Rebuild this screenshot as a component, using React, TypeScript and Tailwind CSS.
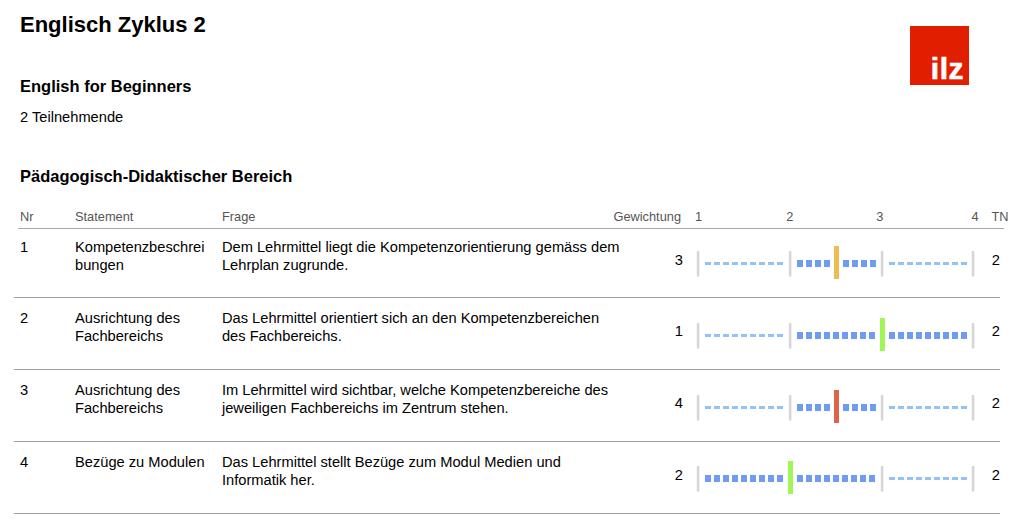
import React from 'react';

type RowData = {
  nr: number;
  statement: string;
  frage: string;
  value: number;
  tn: number;
  marker: number;
  color: string;
  from: number;
  to: number;
  chartClass: string;
};

const rows: RowData[] = [
  {
    nr: 1,
    statement: 'Kompetenzbeschrei bungen',
    frage: 'Dem Lehrmittel liegt die Kompetenzorientierung gemäss dem Lehrplan zugrunde.',
    value: 3,
    tn: 2,
    marker: 2.5,
    color: '#ebbd53',
    from: 2,
    to: 3,
    chartClass: 'pt-[12px]',
  },
  {
    nr: 2,
    statement: 'Ausrichtung des Fachbereichs',
    frage: 'Das Lehrmittel orientiert sich an den Kompetenzbereichen des Fachbereichs.',
    value: 1,
    tn: 2,
    marker: 3,
    color: '#9df754',
    from: 2,
    to: 4,
    chartClass: 'pt-[13px]',
  },
  {
    nr: 3,
    statement: 'Ausrichtung des Fachbereichs',
    frage: 'Im Lehrmittel wird sichtbar, welche Kompetenzbereiche des jeweiligen Fachbereichs im Zentrum stehen.',
    value: 4,
    tn: 2,
    marker: 2.5,
    color: '#e0614c',
    from: 2,
    to: 3,
    chartClass: 'pt-[13px]',
  },
  {
    nr: 4,
    statement: 'Bezüge zu Modulen',
    frage: 'Das Lehrmittel stellt Bezüge zum Modul Medien und Informatik her.',
    value: 2,
    tn: 2,
    marker: 2,
    color: '#9df754',
    from: 1,
    to: 3,
    chartClass: 'pt-[12px]',
  },
];

const tickX = [0, 92, 184, 275];

const Segment = ({ index, dark, marker }: { index: number; dark: boolean; marker: number }) => {
  const start = tickX[index] + 8;
  // marker in the middle of a segment: four blocks on either side
  const offsets =
    dark && marker > index + 1 && marker < index + 2
      ? [0, 9, 18, 27, 46, 55, 64, 73]
      : [0, 9, 18, 27, 36, 45, 54, 63, 72];
  return (
    <>
      {offsets.map((d) =>
        dark ? (
          <rect key={d} x={start + d} y={10} width={6} height={7} fill="#6f9cf3" />
        ) : (
          <rect key={d} x={start + d} y={12} width={6} height={3} fill="#93c2fb" />
        ),
      )}
    </>
  );
};

const Chart = ({ row }: { row: RowData }) => {
  const markerX = row.marker === 2.5 ? 137 : ((row.marker - 1) / 3) * 276 - 1;
  return (
    <svg width={280} height={30} className="block shrink-0 overflow-visible">
      {tickX.map((x) => (
        <rect key={x} x={x - 0.2} y={1} width={2.6} height={25.5} fill="#d6d6d6" />
      ))}
      {[0, 1, 2].map((i) => (
        <Segment key={i} index={i} dark={i + 1 >= row.from && i + 1 < row.to} marker={row.marker} />
      ))}
      <rect x={markerX} y={-4} width={5} height={33} fill={row.color} />
    </svg>
  );
};

const App = () => {
  return (
    <div className="w-[1016px] h-[521px] overflow-hidden bg-white text-black font-['Liberation_Sans',Arial,sans-serif]">
      <div className="flex justify-between pl-5 pr-[47px] pt-[14px]">
        <div>
          <h1 className="text-[22px] font-bold leading-[22px]">Englisch Zyklus 2</h1>
          <h2 className="text-[16.5px] font-bold leading-[17px] mt-[42px]">English for Beginners</h2>
          <p className="text-[14.67px] leading-[15px] mt-[15px]">2 Teilnehmende</p>
        </div>
        <div className="w-[59px] h-[59px] mt-3 bg-[#e11f00] flex items-end justify-end pr-[5px] pb-[1px]">
          <span className="text-white font-bold text-[30px] leading-none tracking-[0.5px] [-webkit-text-stroke:0.6px_white]">ilz</span>
        </div>
      </div>

      <h2 className="text-[16.5px] font-bold leading-[17px] pl-5 mt-[43px]">Pädagogisch-Didaktischer Bereich</h2>

      <div className="mt-[24px]">
        <div className="flex h-[20px] ml-[18px] w-[986px] pl-[2px] items-start border-b border-[#a8a8a8] text-[12.8px] leading-[15px] text-[#555555]">
          <div className="w-[55px] shrink-0">Nr</div>
          <div className="w-[147px] shrink-0">Statement</div>
          <div className="w-[459px] shrink-0 flex justify-between">
            <span>Frage</span>
            <span>Gewichtung</span>
          </div>
          <div className="ml-[14px] flex shrink-0 whitespace-nowrap">
            <span>1</span>
            <span className="ml-[84px]">2</span>
            <span className="ml-[83px]">3</span>
            <span className="ml-[88px]">4</span>
            <span className="ml-[13px]">TN</span>
          </div>
        </div>

        {rows.map((row, i) => (
          <div
            key={row.nr}
            className={`flex ml-[14px] w-[986px] pl-[6px] border-b border-[#a0a0a0] text-[14.67px] leading-[18.4px] ${
              i === 0 ? 'h-[69px] pt-[9px]' : 'h-[72px] pt-[11px]'
            }`}
          >
            <div className="w-[55px]">{row.nr}</div>
            <div className="w-[147px] pr-4">{row.statement}</div>
            <div className="w-[420px] pr-[20px]">{row.frage}</div>
            <div className="w-[41px] pt-[13px] text-right">{row.value}</div>
            <div className={`ml-[14px] ${row.chartClass}`}>
              <Chart row={row} />
            </div>
            <div className="pt-[13px] ml-[15px]">{row.tn}</div>
          </div>
        ))}
      </div>
    </div>
  );
};

export default App;
